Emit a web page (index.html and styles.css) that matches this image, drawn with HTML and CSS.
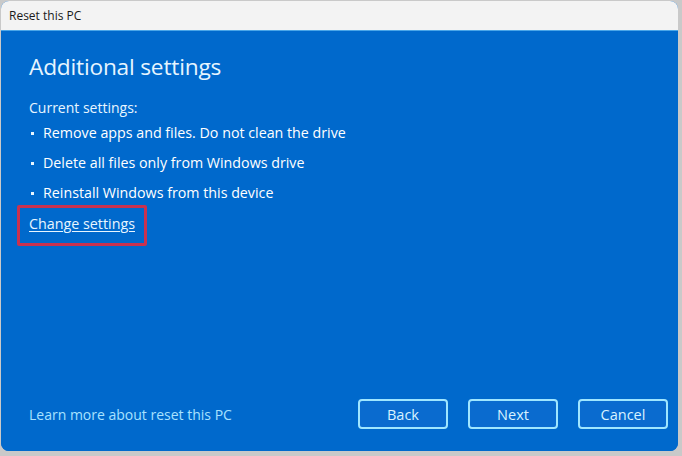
FILE: index.html
```html
<!DOCTYPE html>
<html lang="en">
<head>
<meta charset="utf-8">
<title>Reset this PC</title>
<link rel="stylesheet" href="styles.css">
</head>
<body>
<div class="window">
  <div class="titlebar">Reset this PC</div>
  <div class="content">
    <div class="main">
      <h1 class="heading">Additional settings</h1>
      <p class="label">Current settings:</p>
      <ul class="list">
        <li>Remove apps and files. Do not clean the drive</li>
        <li>Delete all files only from Windows drive</li>
        <li>Reinstall Windows from this device</li>
      </ul>
      <div class="change-row"><a class="change" href="#">Change settings</a></div>
    </div>
    <div class="footer">
      <a class="learn" href="#">Learn more about reset this PC</a>
      <div class="buttons">
        <button class="btn">Back</button>
        <button class="btn">Next</button>
        <button class="btn">Cancel</button>
      </div>
    </div>
  </div>
</div>
</body>
</html>
```
FILE: styles.css
```css
html, body {
  margin: 0;
  padding: 0;
}
body {
  width: 682px;
  height: 456px;
  background: #c9c9c9;
  font-family: "Open Sans", "Noto Sans", sans-serif;
  overflow: hidden;
}
.window {
  margin: 1px 0 0 1px;
  width: 677px;
  height: 450px;
  border-radius: 8px;
  overflow: hidden;
  display: flex;
  flex-direction: column;
  background: #0069cc;
}
.titlebar {
  height: 30px;
  flex: none;
  background: #f3f3f3;
  color: #1a1a1a;
  font-size: 12px;
  line-height: 30px;
  padding-left: 8px;
  border-bottom: 1px solid #4aa6e8;
  box-sizing: border-box;
}
.content {
  flex: 1;
  display: flex;
  flex-direction: column;
  justify-content: space-between;
  padding: 20px 10px 22px 28px;
  background: #0069cc;
}
.heading {
  margin: 0;
  font-weight: 400;
  font-size: 22.7px;
  line-height: 32px;
  color: #e6f5ff;
  letter-spacing: -0.2px;
}
.label {
  margin: 15px 0 0;
  font-size: 14px;
  line-height: 20px;
  color: #e8f6ff;
}
.list {
  list-style: none;
  margin: 0;
  padding: 0;
}
.list li {
  font-size: 14.25px;
  line-height: 30px;
  color: #ffffff;
  padding-left: 14px;
  position: relative;
}
.list li::before {
  content: "";
  position: absolute;
  left: 2px;
  top: 14px;
  width: 3px;
  height: 3px;
  background: #e8f6ff;
}
.change-row {
  line-height: 30px;
}
.change {
  position: relative;
  display: inline-block;
  font-size: 14.3px;
  color: #e8f6ff;
  text-decoration: underline;
  text-underline-offset: 2px;
}
.change::after {
  content: "";
  position: absolute;
  left: -12px;
  right: -12px;
  top: -4px;
  bottom: -7px;
  border: 3px solid #c8324f;
  border-radius: 2px;
}
.footer {
  display: flex;
  align-items: center;
  justify-content: space-between;
}
.learn {
  font-size: 14px;
  color: #a8e2ff;
  text-decoration: none;
}
.buttons {
  display: flex;
  gap: 20px;
}
.btn {
  width: 90px;
  height: 30px;
  box-sizing: border-box;
  border: 2px solid #9fe6ff;
  border-radius: 4px;
  background: #0a6bcf;
  color: #d8f2ff;
  font-family: "Open Sans", "Noto Sans", sans-serif;
  font-size: 14.5px;
  padding: 0;
}
```
